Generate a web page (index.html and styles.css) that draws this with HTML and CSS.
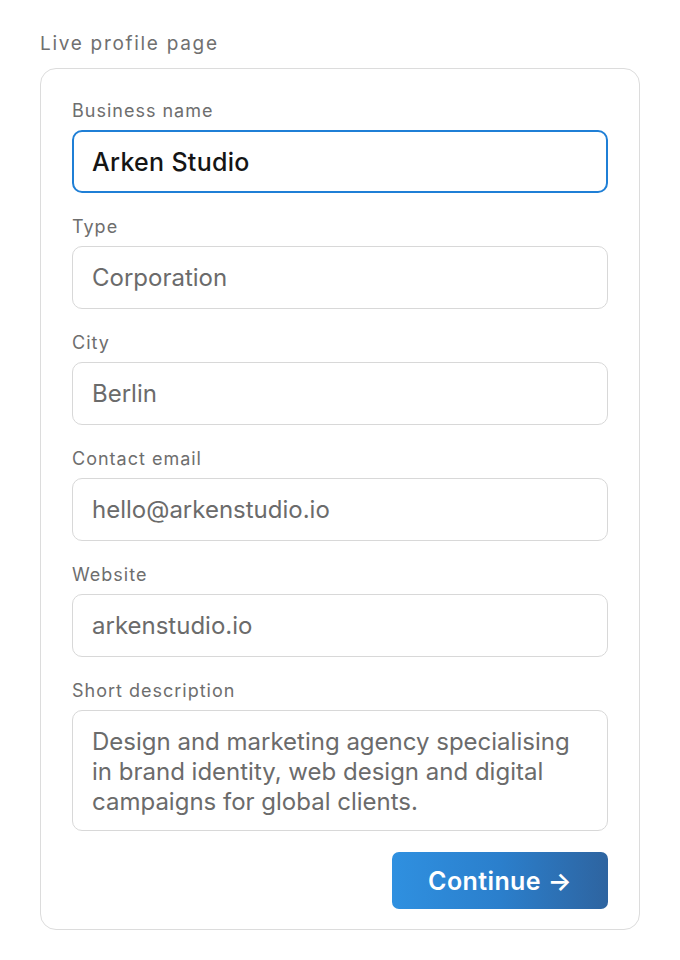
FILE: index.html
```html
<!DOCTYPE html>
<html lang="en">
<head>
<meta charset="utf-8">
<title>Live profile page</title>
<link rel="stylesheet" href="styles.css">
</head>
<body>
<main class="page">
  <h2 class="section-title">Live profile page</h2>
  <form class="card">
    <div class="field">
      <label class="label" for="name">Business name</label>
      <input class="input input-focus" id="name" type="text" value="Arken Studio">
    </div>
    <div class="field">
      <label class="label" for="type">Type</label>
      <input class="input" id="type" type="text" value="Corporation">
    </div>
    <div class="field">
      <label class="label" for="city">City</label>
      <input class="input" id="city" type="text" value="Berlin">
    </div>
    <div class="field">
      <label class="label" for="email">Contact email</label>
      <input class="input" id="email" type="text" value="hello@arkenstudio.io">
    </div>
    <div class="field">
      <label class="label" for="web">Website</label>
      <input class="input" id="web" type="text" value="arkenstudio.io">
    </div>
    <div class="field">
      <label class="label" for="desc">Short description</label>
      <textarea class="input textarea" id="desc" rows="3">Design and marketing agency specialising in brand identity, web design and digital campaigns for global clients.</textarea>
    </div>
    <div class="actions">
      <button class="btn" type="button">Continue →</button>
    </div>
  </form>
</main>
</body>
</html>
```

FILE: styles.css
```css
* { box-sizing: border-box; }
html, body { margin: 0; padding: 0; background: #ffffff; }
body {
  font-family: Inter, "Noto Sans", "Liberation Sans", sans-serif;
  color: #111;
}
.page {
  padding: 33px 40px 30px;
  width: 680px;
}
.section-title {
  margin: 0 0 13px;
  font-size: 19px;
  line-height: 22px;
  font-weight: 400;
  letter-spacing: 1.7px;
  color: #707070;
}
.card {
  width: 600px;
  border: 1px solid #dcdcdc;
  border-radius: 16px;
  padding: 30px 31px 20px;
  display: flex;
  flex-direction: column;
  gap: 22px;
}
.field {
  display: flex;
  flex-direction: column;
  gap: 7px;
}
.label {
  font-size: 18px;
  line-height: 24px;
  letter-spacing: 1px;
  color: #6e6e6e;
  font-weight: 400;
}
.input {
  display: block;
  width: 100%;
  height: 63px;
  border: 1px solid #d8d8d8;
  border-radius: 10px;
  padding: 0 19px;
  font-family: inherit;
  font-size: 24px;
  color: #6b6b6b;
  background: #fff;
  outline: none;
}
.input-focus {
  border: 2px solid #1f7fd6;
  padding: 0 18px;
  font-size: 25px;
  font-weight: 500;
  letter-spacing: 0.3px;
  color: #151515;
}
.textarea {
  height: 121px;
  padding: 16px 19px;
  line-height: 30px;
  resize: none;
  overflow: hidden;
}
.actions {
  display: flex;
  justify-content: flex-end;
  margin-top: -1px;
}
.btn {
  width: 216px;
  height: 57px;
  border: none;
  border-radius: 7px;
  background: linear-gradient(90deg, #2f90e0 0%, #2b7fcc 50%, #2e64a0 100%);
  color: #fff;
  font-family: inherit;
  font-size: 25px;
  font-weight: 600;
  letter-spacing: 0.4px;
  padding: 0;
  cursor: pointer;
}
```
